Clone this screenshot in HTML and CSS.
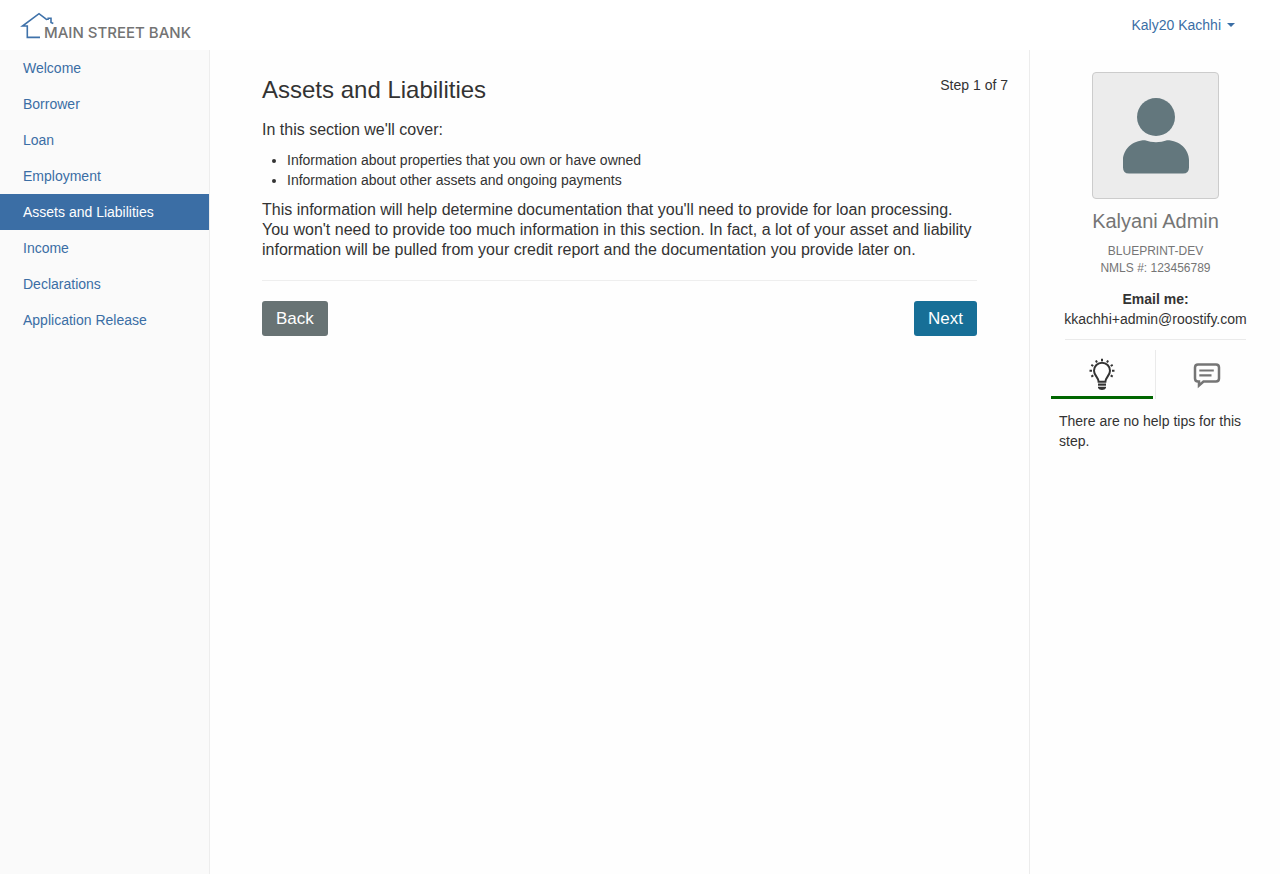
FILE: index.html
```html
<!DOCTYPE html>
<html lang="en">
<head>
<meta charset="utf-8">
<meta name="viewport" content="width=device-width, initial-scale=1">
<title>Assets and Liabilities</title>
<link rel="stylesheet" href="styles.css">
</head>
<body>
<header class="topbar">
  <a class="brand" href="#">
    <svg class="brand-house" width="34" height="28" viewBox="0 0 34 28" aria-hidden="true"><path d="M20 26.400H7.300V15H2.500L19 2.700l7.500 5.800 1.700-.3v-.9h2.800v4.200l2.300 1" fill="none" stroke="#3f72aa" stroke-width="1.600"/></svg>
    <span class="brand-name">MAIN STREET BANK</span>
  </a>
  <button class="user-menu" type="button">Kaly20 Kachhi <span class="caret"></span></button>
</header>
<div class="layout">
  <nav class="sidebar" aria-label="Application">
    <a class="nav-link" href="#">Welcome</a>
    <a class="nav-link" href="#">Borrower</a>
    <a class="nav-link" href="#">Loan</a>
    <a class="nav-link" href="#">Employment</a>
    <a class="nav-link active" href="#" aria-current="page">Assets and Liabilities</a>
    <a class="nav-link" href="#">Income</a>
    <a class="nav-link" href="#">Declarations</a>
    <a class="nav-link" href="#">Application Release</a>
  </nav>
  <main class="content">
    <div class="title-row">
      <h1 class="title">Assets and Liabilities</h1>
      <span class="step">Step 1 of 7</span>
    </div>
    <div class="body">
      <p class="lead">In this section we'll cover:</p>
      <ul class="topics">
        <li>Information about properties that you own or have owned</li>
        <li>Information about other assets and ongoing payments</li>
      </ul>
      <p class="lead">This information will help determine documentation that you'll need to provide for loan processing. You won't need to provide too much information in this section. In fact, a lot of your asset and liability information will be pulled from your credit report and the documentation you provide later on.</p>
      <div class="actions">
        <button class="btn btn-back" type="button">Back</button>
        <button class="btn btn-next" type="button">Next</button>
      </div>
    </div>
  </main>
  <aside class="contact">
    <div class="card">
      <div class="avatar">
        <svg width="125" height="125" viewBox="0 0 125 125" role="img" aria-label="Profile picture"><circle cx="63" cy="44" r="19" fill="#63777d"/><path d="M52 67.300c7 2.600 15 2.600 22 0C87 67.300 96 77 96 87v7.500q0 6-6 6H36q-6 0-6-6V87c0-10 9-19.700 22-19.700z" fill="#63777d"/></svg>
      </div>
      <h2 class="name">Kalyani Admin</h2>
      <p class="org">BLUEPRINT-DEV<br>NMLS #: 123456789</p>
      <p class="email"><strong>Email me:</strong><br><a href="#">kkachhi+admin@roostify.com</a></p>
    </div>
    <div class="tabs">
      <button class="tab selected" type="button" aria-label="Help tips">
        <svg width="28" height="34" viewBox="0 0 28 34" aria-hidden="true"><g fill="none" stroke="#333"><path d="M10.600 23.700C10.300 19 6 17.500 6 12.700a8 8 0 0 1 16 0c0 4.800-4.300 6.300-4.600 11z" stroke-width="2"/><path d="M14 .8v2.400M7.900 2.500l1.100 2M20.100 2.500l-1.100 2M3.300 6.800l2 1.200M24.700 6.800l-2 1.200M1.500 12.700H4M26.500 12.700H24M3.300 18.600l2-1.200M24.700 18.600l-2-1.200" stroke-width="2"/><path d="M10 26.600h8" stroke-width="2.200"/></g><path d="M10 28.700h8v1.300q-1 2-4 2t-4-2z" fill="#333"/></svg>
      </button>
      <button class="tab" type="button" aria-label="Messages">
        <svg width="28" height="28" viewBox="0 0 28 28" aria-hidden="true"><g fill="none" stroke="#757575" stroke-width="2.500"><path d="M5 3.500h18q3 0 3 3v11q0 3-3 3H10.500L6 24.500v-4H5q-3 0-3-3v-11q0-3 3-3z"/><path d="M6.300 9.500h14.500M6.300 14.300h12.200" stroke-width="2.200"/></g></svg>
      </button>
    </div>
    <p class="tips">There are no help tips for this step.</p>
  </aside>
</div>
</body>
</html>
```
FILE: styles.css
```css
* { box-sizing: border-box; }

body {
  margin: 0;
  min-height: 100vh;
  display: flex;
  flex-direction: column;
  font: 14px/20px "Liberation Sans", Arial, sans-serif;
  color: #333;
  background: #fefefe;
}

a { color: #3b6ea5; text-decoration: none; }
h1, h2, p, ul { margin: 0; font-weight: normal; }
button { font-family: inherit; cursor: pointer; }

.topbar {
  height: 50px;
  padding: 0 45px 0 20px;
  display: flex;
  justify-content: space-between;
  align-items: center;
  background: #fff;
}
.brand { display: flex; align-items: flex-end; }
.brand-house { margin-right: -10px; }
.brand-name {
  padding-top: 16px;
  font: 500 15px/12px Inter, sans-serif;
  color: #737373;
}
.user-menu {
  display: flex;
  align-items: center;
  gap: 6px;
  padding: 0;
  border: 0;
  background: none;
  font-size: 14px;
  line-height: 20px;
  color: #3b6ea5;
}
.caret {
  border: 4px solid transparent;
  border-top-color: #3b6ea5;
  border-bottom: 0;
}

.layout {
  flex: 1;
  display: grid;
  grid-template-columns: 210px 1fr 251px;
}

.sidebar { background: #fafafa; border-right: 1px solid #ededed; }
.nav-link { display: block; padding: 8px 23px; }
.nav-link.active { background: #3b6ea5; color: #fff; }

.content { padding: 25px 21px 25px 52px; }
.title-row { display: flex; justify-content: space-between; }
.title { font-size: 24px; line-height: 30px; }
.step { line-height: 20px; }
.body { padding: 15px 31px 0 0; }
.lead { font-size: 16px; line-height: 20px; }
.topics { margin: 10px 0; padding-left: 25px; }
.actions {
  display: flex;
  justify-content: space-between;
  margin-top: 20px;
  padding-top: 20px;
  border-top: 1px solid #eee;
}
.btn {
  height: 35px;
  padding: 0 14px;
  border: 0;
  border-radius: 3px;
  font-size: 17px;
  color: #fff;
}
.btn-back { background: #687374; }
.btn-next { background: #176f97; }

.contact { padding: 22px 21px; border-left: 1px solid #ececec; }
.card {
  margin: 0 13px 0 14px;
  padding-bottom: 10px;
  border-bottom: 1px solid #eaeaea;
  display: flex;
  flex-direction: column;
  align-items: center;
  text-align: center;
}
.avatar {
  display: flex;
  border: 1px solid #ccc;
  border-radius: 4px;
  background: #ececec;
  overflow: hidden;
}
.name { margin-top: 10px; font-size: 20px; line-height: 24px; color: #757575; }
.org { margin-top: 10px; font-size: 12px; line-height: 17px; color: #757575; }
.email { margin-top: 12px; white-space: nowrap; }
.email a { color: #333; }

.tabs { display: grid; grid-template-columns: 1fr 1fr; margin-top: 10px; }
.tab {
  height: 49px;
  padding: 2px 0 0;
  display: flex;
  justify-content: center;
  align-items: center;
  border: 0;
  background: none;
}
.tab.selected { padding-top: 4px; border-bottom: 3px solid #060; margin-right: 2px; }
.tab + .tab { padding: 0 2px 0 0; border-left: 1px solid #eaeaea; }
.tips { margin-top: 12px; padding: 0 8px; }
```
